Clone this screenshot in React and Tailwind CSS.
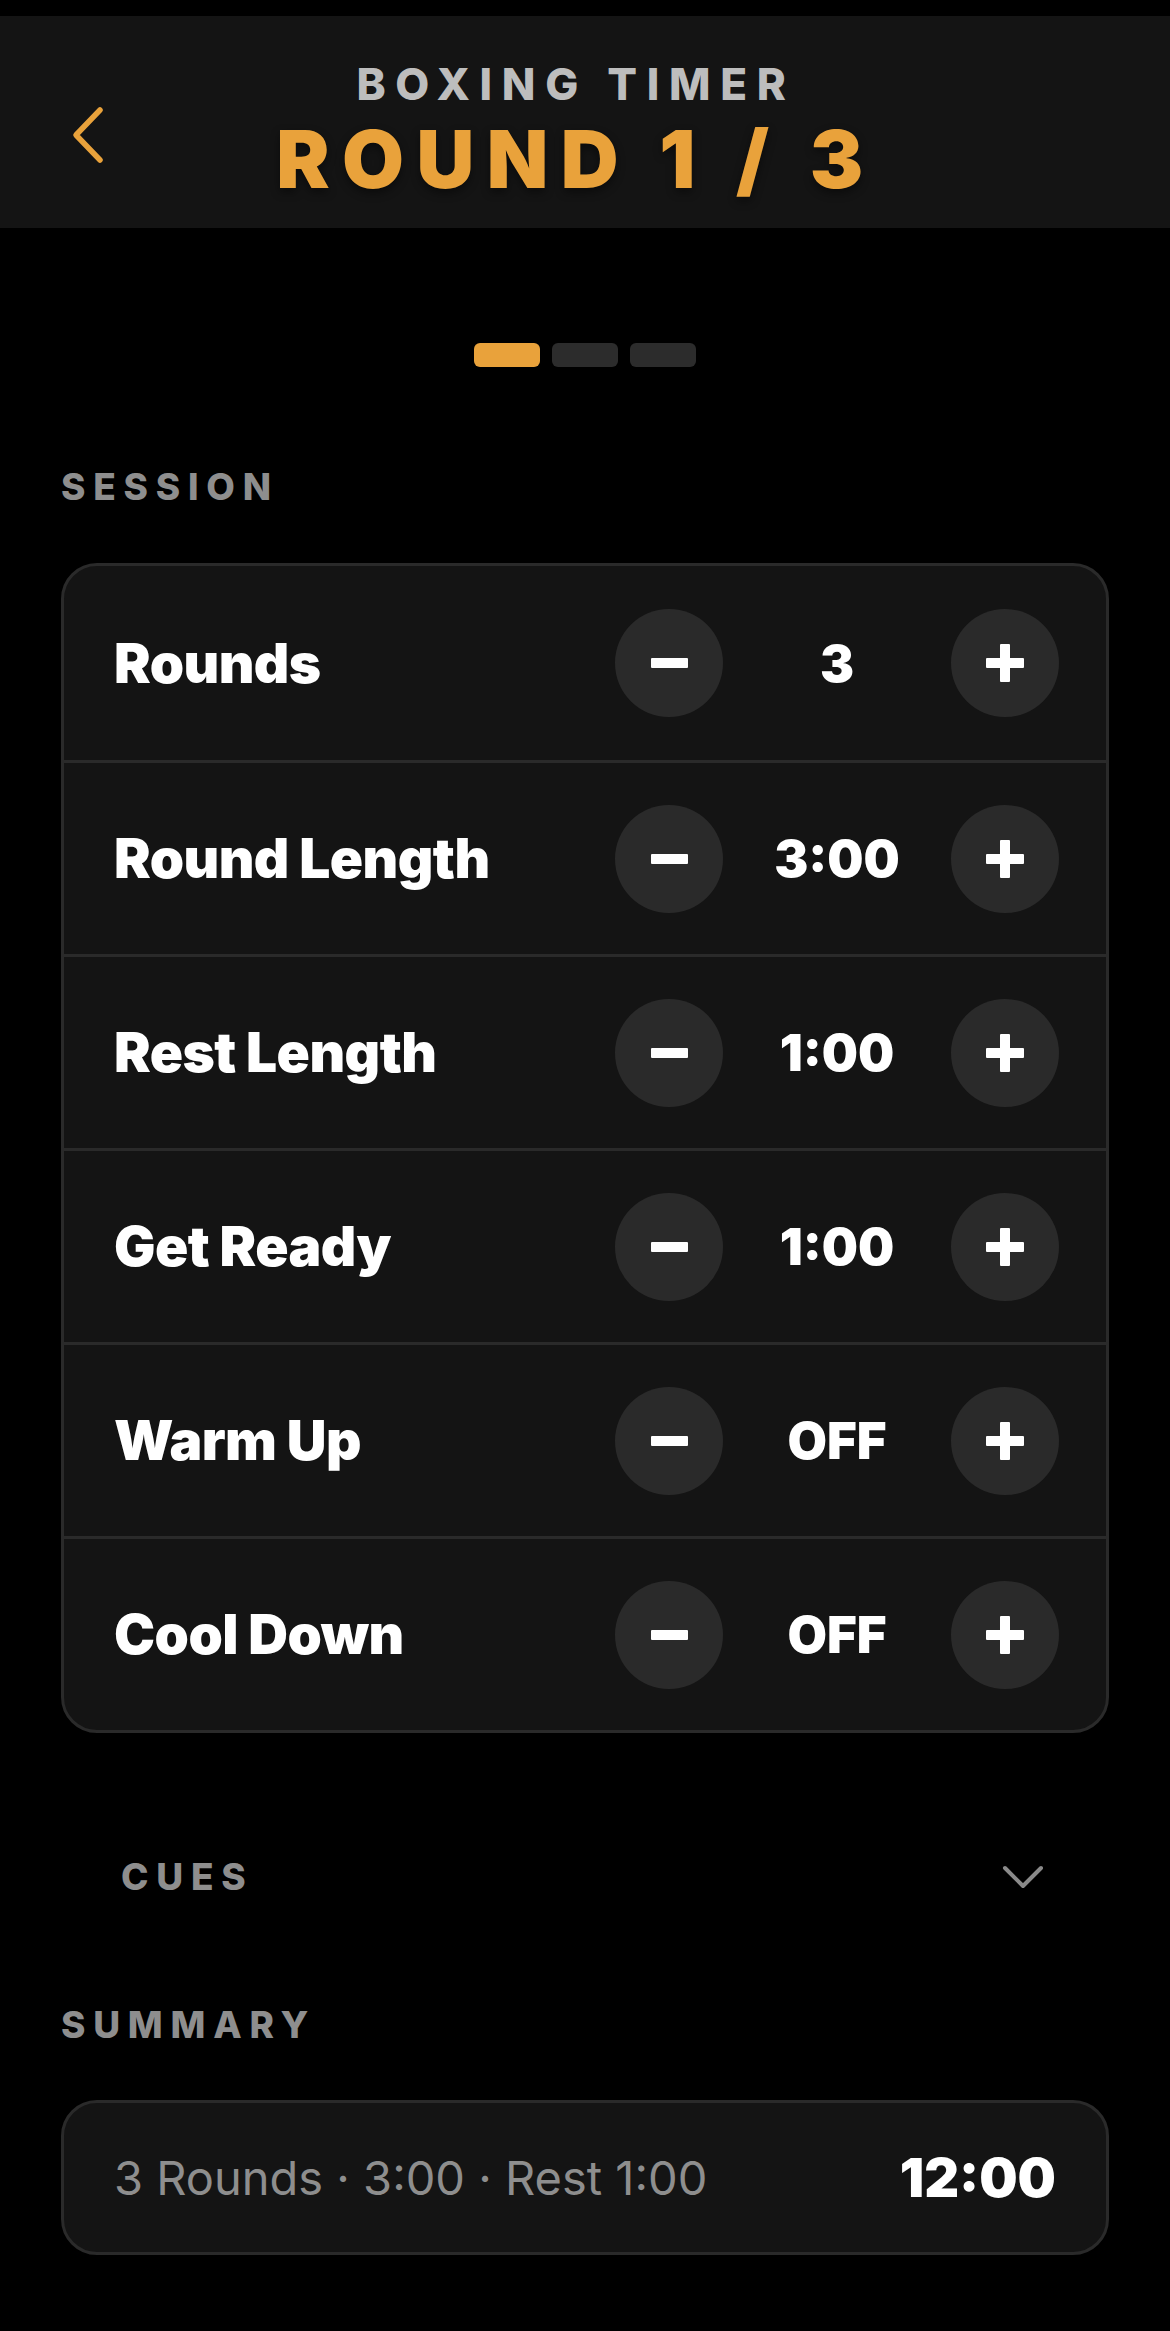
import React from "react";

const rows = [
  { label: "Rounds", value: "3" },
  { label: "Round Length", value: "3:00" },
  { label: "Rest Length", value: "1:00" },
  { label: "Get Ready", value: "1:00" },
  { label: "Warm Up", value: "OFF" },
  { label: "Cool Down", value: "OFF" },
];

function Minus() {
  return (
    <button className="w-[108px] h-[108px] rounded-full bg-[#2a2a2a] flex items-center justify-center shrink-0">
      <span className="block w-[37px] h-[10px] bg-white rounded-[1px]" />
    </button>
  );
}

function Plus() {
  return (
    <button className="relative w-[108px] h-[108px] rounded-full bg-[#2a2a2a] flex items-center justify-center shrink-0">
      <span className="block w-[38px] h-[10px] bg-white rounded-[1px]" />
      <span className="absolute w-[10px] h-[38px] bg-white rounded-[1px]" />
    </button>
  );
}

export default function App() {
  return (
    <div
      className="w-full min-h-[2331px] bg-black text-white"
      style={{ fontFamily: "Inter, 'Noto Sans', sans-serif" }}
    >
      <div className="h-[16px] bg-black" />
      <header className="relative h-[212px] bg-[#141414] flex flex-col items-center pt-[46px] pr-[18px]">
        <button className="absolute left-[63px] top-[84px] p-[4px]">
          <svg width="40" height="62" viewBox="0 0 40 62" fill="none">
            <path d="M33 6 L9 31 L33 56" stroke="#e9a23b" strokeWidth="5.5" strokeLinecap="round" strokeLinejoin="round" />
          </svg>
        </button>
        <div className="text-[44px] leading-none font-extrabold tracking-[0.22em] text-[#bdbdbd]">
          BOXING TIMER
        </div>
        <div className="mt-[13px] text-[80px] leading-none font-black tracking-[0.155em] text-[#e9a23b] [text-shadow:0_4px_10px_rgba(0,0,0,0.45)]">
          ROUND 1 / 3
        </div>
      </header>

      <div className="mt-[115px] flex justify-center gap-[12px]">
        <span className="w-[66px] h-[24px] rounded-[6px] bg-[#e9a23b]" />
        <span className="w-[66px] h-[24px] rounded-[6px] bg-[#2c2c2c]" />
        <span className="w-[66px] h-[24px] rounded-[6px] bg-[#2c2c2c]" />
      </div>

      <div className="px-[61px]">
        <div className="mt-[101px] text-[37px] leading-none font-extrabold tracking-[0.21em] text-[#8e8e8e]">
          SESSION
        </div>

        <div className="mt-[58px] rounded-[36px] border-[3px] border-[#2a2a2a] bg-[#141414] overflow-hidden">
          {rows.map((r, i) => (
            <div
              key={r.label}
              className={
                "h-[194px] flex items-center pl-[50px] pr-[47px] " +
                (i > 0 ? "border-t-[3px] border-[#2a2a2a]" : "")
              }
            >
              <div className="flex-1 text-[55px] leading-none font-black tracking-[-0.01em] text-white">
                {r.label}
              </div>
              <Minus />
              <div className="w-[228px] text-center text-[51px] leading-none font-black text-white">
                {r.value}
              </div>
              <Plus />
            </div>
          ))}
        </div>

        <button className="mt-[125px] w-full flex items-center justify-between pl-[60px] pr-[65px]">
          <span className="text-[37px] leading-none font-extrabold tracking-[0.21em] text-[#8e8e8e]">
            CUES
          </span>
          <svg width="42" height="26" viewBox="0 0 42 26" fill="none">
            <path d="M3 4 L21 22 L39 4" stroke="#8a8a8a" strokeWidth="4" strokeLinecap="round" strokeLinejoin="round" />
          </svg>
        </button>

        <div className="mt-[111px] text-[37px] leading-none font-extrabold tracking-[0.21em] text-[#8e8e8e]">
          SUMMARY
        </div>

        <div className="mt-[57px] h-[155px] rounded-[36px] border-[3px] border-[#2a2a2a] bg-[#141414] flex items-center justify-between pl-[50px] pr-[50px]">
          <span className="text-[47px] leading-none font-normal text-[#8e8e8e]">
            3 Rounds · 3:00 · Rest 1:00
          </span>
          <span className="text-[54px] leading-none font-black text-white">12:00</span>
        </div>
      </div>
    </div>
  );
}
